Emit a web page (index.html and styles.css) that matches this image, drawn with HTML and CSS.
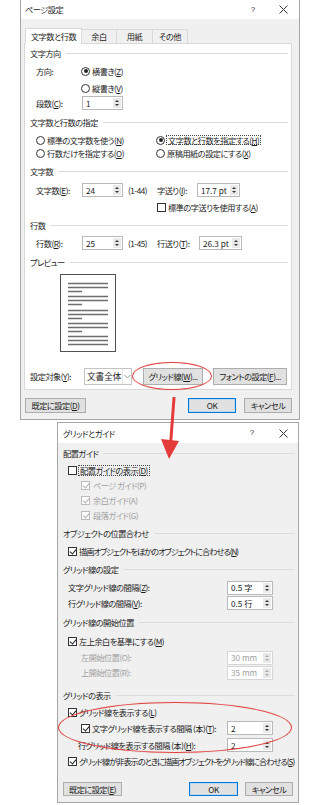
FILE: index.html
```html
<!DOCTYPE html>
<html lang="ja">
<head>
<meta charset="utf-8">
<title>ページ設定</title>
<link rel="stylesheet" href="styles.css">
</head>
<body>
<div class="page">

  <div class="dlg dlg1">
    <div class="titlebar">
      <span class="ttl">ページ設定</span>
      <span class="help">?</span>
      <span class="close"><svg width="9" height="9" viewBox="0 0 9 9"><path d="M0.5 0.5L8.5 8.5M8.5 0.5L0.5 8.5" stroke="#333" stroke-width="1"/></svg></span>
    </div>
    <div class="body1">
      <div class="tabs">
        <div class="tab active t1">文字数と行数</div>
        <div class="tab t2">余白</div>
        <div class="tab t3">用紙</div>
        <div class="tab t4">その他</div>
      </div>
      <div class="panel">
        <div class="grp h16 mt1"><span>文字方向</span><i class="sep"></i></div>
        <div class="row h20 ind6"><span class="lbl w45">方向:</span><span class="radio on"></span><span class="gap2">横書き(<u>Z</u>)</span></div>
        <div class="row h14 ind51"><span class="radio"></span><span class="gap2">縦書き(<u>V</u>)</span></div>
        <div class="row h16 ind6"><span class="lbl w46">段数(<u>C</u>):</span><span class="spin w41"><span class="val">1</span><span class="arrows"><i class="up"></i><i class="dn"></i></span></span></div>

        <div class="grp h22"><span>文字数と行数の指定</span><i class="sep"></i></div>
        <div class="row h14 ind6">
          <span class="rcell"><span class="radio"></span><span class="gap2">標準の文字数を使う(<u>N</u>)</span></span>
          <span class="rcell"><span class="radio on"></span><span class="gap2 focus">文字数と行数を指定する(<u>H</u>)</span></span>
        </div>
        <div class="row h12 ind6">
          <span class="rcell"><span class="radio"></span><span class="gap2">行数だけを指定する(<u>O</u>)</span></span>
          <span class="rcell"><span class="radio"></span><span class="gap2">原稿用紙の設定にする(<u>X</u>)</span></span>
        </div>

        <div class="grp h24"><span>文字数</span><i class="sep"></i></div>
        <div class="row h14 ind6">
          <span class="lbl w46">文字数(<u>E</u>):</span>
          <span class="spin w41"><span class="val">24</span><span class="arrows"><i class="up"></i><i class="dn"></i></span></span>
          <span class="lbl w34 pl5">(1-44)</span>
          <span class="lbl w40">字送り(<u>I</u>):</span>
          <span class="spin w43"><span class="val">17.7 pt</span><span class="arrows"><i class="up"></i><i class="dn"></i></span></span>
        </div>
        <div class="row h20 ind127"><span class="cb"></span><span class="gap2">標準の字送りを使用する(<u>A</u>)</span></div>

        <div class="grp h16"><span>行数</span><i class="sep"></i></div>
        <div class="row h20 ind6">
          <span class="lbl w46">行数(<u>R</u>):</span>
          <span class="spin w41"><span class="val">25</span><span class="arrows"><i class="up"></i><i class="dn"></i></span></span>
          <span class="lbl w34 pl5">(1-45)</span>
          <span class="lbl w42">行送り(<u>T</u>):</span>
          <span class="spin w43"><span class="val">26.3 pt</span><span class="arrows"><i class="up"></i><i class="dn"></i></span></span>
        </div>

        <div class="grp h18"><span>プレビュー</span><i class="sep"></i></div>
        <div class="preview">
          <svg width="54" height="76" viewBox="0 0 54 76">
            <g stroke="#6e6e6e" stroke-width="1.3">
              <path d="M7 8.5H47M7 12.5H47M7 16.5H21"/>
              <path d="M7 21.5H47M7 25.5H47M7 29.5H21"/>
              <path d="M7 35.5H47M7 39.5H47M7 43.5H21"/>
              <path d="M7 48.5H47M7 52.5H47M7 56.5H21"/>
              <path d="M7 61.5H47M7 65.5H47M7 69.5H47"/>
            </g>
          </svg>
        </div>

        <div class="row h17 mt16">
          <span class="lbl w54">設定対象(<u>Y</u>):</span>
          <span class="select"><span class="val">文書全体</span><span class="chev"><svg width="7" height="5" viewBox="0 0 7 5"><path d="M0.5 1L3.5 4L6.5 1" fill="none" stroke="#9a9a9a" stroke-width="1"/></svg></span></span>
          <span class="btn b60 ml11">グリッド線(<u>W</u>)...</span>
          <span class="btn b74 ml10">フォントの設定(<u>F</u>)...</span>
        </div>
      </div>
      <div class="footer1">
        <span class="btn b61">既定に設定(<u>D</u>)</span>
        <span class="spacer"></span>
        <span class="btn ok b48">OK</span>
        <span class="btn b48 ml8">キャンセル</span>
      </div>
    </div>
  </div>

  <div class="dlg dlg2">
    <div class="titlebar">
      <span class="ttl">グリッドとガイド</span>
      <span class="help">?</span>
      <span class="close"><svg width="9" height="9" viewBox="0 0 9 9"><path d="M0.5 0.5L8.5 8.5M8.5 0.5L0.5 8.5" stroke="#333" stroke-width="1"/></svg></span>
    </div>
    <div class="body2">
      <div class="grp h20"><span>配置ガイド</span><i class="sep"></i></div>
      <div class="row h15 ind5"><span class="cb"></span><span class="gap2 focus">配置ガイドの表示(<u>D</u>)</span></div>
      <div class="row h15 ind18 dis"><span class="cb on"></span><span class="gap3">ページ ガイド(P)</span></div>
      <div class="row h14 ind18 dis"><span class="cb on"></span><span class="gap3">余白ガイド(A)</span></div>
      <div class="row h16 ind18 dis"><span class="cb on"></span><span class="gap3">段落ガイド(G)</span></div>

      <div class="grp h20"><span>オブジェクトの位置合わせ</span><i class="sep"></i></div>
      <div class="row h16 ind5"><span class="cb on"></span><span class="gap2 tight">描画オブジェクトをほかのオブジェクトに合わせる(<u>N</u>)</span></div>

      <div class="grp h21"><span>グリッド線の設定</span><i class="sep"></i></div>
      <div class="row h15 ind5 sp"><span>文字グリッド線の間隔(<u>Z</u>):</span><span class="spin w46"><span class="val">0.5 字</span><span class="arrows"><i class="up"></i><i class="dn"></i></span></span></div>
      <div class="row h16 ind5 sp"><span>行グリッド線の間隔(<u>V</u>):</span><span class="spin w46"><span class="val">0.5 行</span><span class="arrows"><i class="up"></i><i class="dn"></i></span></span></div>

      <div class="grp h23"><span>グリッド線の開始位置</span><i class="sep"></i></div>
      <div class="row h14 ind5"><span class="cb on"></span><span class="gap2">左上余白を基準にする(<u>M</u>)</span></div>
      <div class="row h15 mt2 ind18 sp dis"><span>左開始位置(O):</span><span class="spin w46 dspin"><span class="val">30 mm</span><span class="arrows"><i class="up"></i><i class="dn"></i></span></span></div>
      <div class="row h15 ind18 sp dis"><span>上開始位置(R):</span><span class="spin w46 dspin"><span class="val">35 mm</span><span class="arrows"><i class="up"></i><i class="dn"></i></span></span></div>

      <div class="grp h14 mt8"><span>グリッドの表示</span><i class="sep"></i></div>
      <div class="row h16 mt2 ind5"><span class="cb on"></span><span class="gap2">グリッド線を表示する(<u>L</u>)</span></div>
      <div class="row h16 ind18 sp"><span class="cbl"><span class="cb on"></span><span class="gap2">文字グリッド線を表示する間隔 (本)(<u>T</u>):</span></span><span class="spin w46"><span class="val">2</span><span class="arrows"><i class="up"></i><i class="dn"></i></span></span></div>
      <div class="row h16 mt1 ind15 sp"><span>行グリッド線を表示する間隔 (本)(<u>H</u>):</span><span class="spin w46"><span class="val">2</span><span class="arrows"><i class="up"></i><i class="dn"></i></span></span></div>
      <div class="row h16 ind5"><span class="cb on"></span><span class="gap2 tight">グリッド線が非表示のときに描画オブジェクトをグリッド線に合わせる(<u>S</u>)</span></div>

      <div class="footer2">
        <span class="btn b59">既定に設定(<u>E</u>)</span>
        <span class="spacer"></span>
        <span class="btn ok b49">OK</span>
        <span class="btn b48 ml7">キャンセル</span>
      </div>
    </div>
  </div>

  <div class="ring ring1"></div>
  <div class="ring ring2"></div>
  <svg class="arrow" width="30" height="70" viewBox="0 0 30 70">
    <path d="M17 1L13.5 48" stroke="#e53a3a" stroke-width="3" fill="none" stroke-linecap="round"/>
    <path d="M4 42L22 44L12 62Z" fill="#e53a3a"/>
  </svg>
</div>
</body>
</html>
```

FILE: styles.css
```css
* { box-sizing: border-box; margin: 0; padding: 0; }
html, body { width: 320px; height: 805px; background: #fff; overflow: hidden; }
body {
  font-family: "Noto Sans CJK JP", "Noto Sans", sans-serif;
  font-size: 8.2px;
  line-height: 1;
  letter-spacing: -0.5px;
  color: #1b1b1b;
  font-feature-settings: "palt";
}
u { text-decoration: underline; text-underline-offset: 1px; }
i { font-style: normal; }
.tight { letter-spacing: -1px; }

.page { position: relative; width: 320px; height: 805px; }

.dlg { background: #f0f0f0; border: 1px solid #a6a6a6; display: flex; flex-direction: column; }
.dlg1 { margin-left: 20px; width: 280px; height: 420px; border-top: none; }
.dlg2 { margin-left: 57px; margin-top: 2px; width: 242px; height: 381px; }

.titlebar { background: #fff; display: flex; align-items: center; flex: none; }
.dlg1 .titlebar { height: 19px; padding-left: 4px; padding-right: 6px; }
.dlg2 .titlebar { height: 20px; padding-left: 5px; padding-right: 5px; }
.ttl { flex: 1; }
.help { width: 12px; text-align: center; font-family: "Liberation Sans", sans-serif; font-size: 8px; color: #333; letter-spacing: 0; }
.dlg1 .help { margin-right: 14px; }
.dlg2 .help { margin-right: 15px; }
.close { width: 20px; display: flex; justify-content: center; align-items: center; }

/* dialog 1 body */
.body1 { flex: 1; display: flex; flex-direction: column; padding: 9px 7px 0 3px; }
.tabs { display: flex; height: 15px; margin-left: 1px; flex: none; }
.tab {
  border: 1px solid #d9d9d9; border-bottom: none; background: #f0f0f0;
  margin-top: 1px; margin-right: -1px;
  display: flex; align-items: center; justify-content: center;
}
.tab.active { background: #fff; margin-top: 0; position: relative; z-index: 1; margin-bottom: -1px; }
.t1 { width: 57px; }
.t2 { width: 36px; }
.t3 { width: 37px; }
.t4 { width: 36px; }

.panel {
  background: #fff; border: 1px solid #d9d9d9; height: 347px; flex: none;
  display: flex; flex-direction: column; padding: 0 3px 0 5px;
}

.grp { display: flex; align-items: center; flex: none; }
.sep { flex: 1; height: 1px; background: #dcdcdc; margin-left: 5px; }

.row { display: flex; align-items: center; flex: none; white-space: nowrap; }
.sp { justify-content: space-between; padding-right: 22px; }

.h12 { height: 12px; } .h14 { height: 14px; } .h15 { height: 15px; } .h16 { height: 16px; }
.h17 { height: 17px; } .h18 { height: 18px; } .h20 { height: 20px; } .h21 { height: 21px; }
.h22 { height: 22px; } .h23 { height: 23px; } .h24 { height: 24px; }
.mt1 { margin-top: 1px; } .mt2 { margin-top: 2px; } .mt8 { margin-top: 8px; } .mt16 { margin-top: 16px; }

.ind5 { padding-left: 5px; } .ind6 { padding-left: 6px; } .ind15 { padding-left: 15px; }
.ind18 { padding-left: 18px; } .ind51 { padding-left: 51px; } .ind127 { padding-left: 127px; }

.lbl { flex: none; }
.w34 { width: 34px; } .w40 { width: 40px; } .w42 { width: 42px; } .w45 { width: 45px; }
.w46 { width: 46px; } .w54 { width: 54px; }
.pl5 { padding-left: 5px; }
.gap2 { margin-left: 2px; } .gap3 { margin-left: 3px; }
.ml7 { margin-left: 7px; } .ml8 { margin-left: 8px; } .ml10 { margin-left: 10px; } .ml11 { margin-left: 11px; }

.rcell { display: flex; align-items: center; width: 120px; }

.focus { outline: 1px dotted #444; outline-offset: 0; padding: 0 1px; }

/* radio */
.radio { width: 9px; height: 9px; border: 1px solid #333; border-radius: 50%; background: #fff; flex: none; position: relative; }
.radio.on::after { content: ""; position: absolute; left: 1.5px; top: 1.5px; width: 4px; height: 4px; border-radius: 50%; background: #222; }

/* checkbox */
.cb { width: 9px; height: 9px; border: 1px solid #333; background: #fff; flex: none; position: relative; }
.cb.on::after {
  content: ""; position: absolute; left: 2px; top: 0px; width: 3px; height: 5px;
  border-right: 1px solid #222; border-bottom: 1px solid #222; transform: rotate(40deg);
}
.cbl { display: flex; align-items: center; }
.dis { color: #a0a0a0; }
.dis .cb { border-color: #bcbcbc; }
.dis .cb.on::after { border-color: #b0b0b0; }

/* spinbox */
.spin { display: flex; height: 14px; border: 1px solid #b9b9b9; background: #fff; flex: none; }
.w41 { width: 41px; } .w43 { width: 43px; }
.spin.w46 { width: 46px; }
.val { flex: 1; display: flex; align-items: center; padding-left: 3px; letter-spacing: 0; }
.arrows { width: 8px; margin: 1px; background: #e9e9e9; display: flex; flex-direction: column; align-items: center; justify-content: center; gap: 2px; }
.up { width: 0; height: 0; border-left: 2px solid transparent; border-right: 2px solid transparent; border-bottom: 2px solid #333; }
.dn { width: 0; height: 0; border-left: 2px solid transparent; border-right: 2px solid transparent; border-top: 2px solid #333; }
.dspin { border-color: #d6d6d6; }
.dspin .up { border-bottom-color: #aaa; }
.dspin .dn { border-top-color: #aaa; }

/* preview */
.preview { margin-top: 3px; margin-left: 30px; width: 56px; height: 78px; border: 1px solid #505050; background: #fff; flex: none; }
.preview svg { display: block; }

/* select */
.select { width: 48px; height: 17px; border: 1px solid #c4c4c4; background: #fff; display: flex; flex: none; }
.select .val { padding-left: 2px; font-size: 8.6px; }
.chev { width: 9px; display: flex; align-items: center; justify-content: center; border-left: 1px solid #e4e4e4; }

/* buttons */
.btn { height: 17px; border: 1px solid #adadad; background: #e1e1e1; display: flex; align-items: center; justify-content: center; flex: none; white-space: nowrap; }
.b48 { width: 48px; } .b49 { width: 49px; } .b59 { width: 59px; } .b60 { width: 60px; } .b61 { width: 61px; } .b74 { width: 74px; }
.ok { border: 1px solid #0078d7; box-shadow: inset 0 0 0 1px #bcd8f1; }
.spacer { flex: 1; }

.footer1 { display: flex; margin-top: 8px; margin-left: 1px; }
.footer1 .btn { height: 15px; }

.body2 { flex: 1; display: flex; flex-direction: column; padding: 0 3px 0 5px; }
.footer2 { display: flex; margin-top: 13px; margin-right: 2px; }
.footer2 .btn { height: 14px; }

/* annotations */
.ring { position: absolute; border: 1.6px solid #e0413d; border-radius: 50%; box-shadow: 0 0 1px rgba(224,65,61,0.5); }
.ring1 { left: 132px; top: 362px; width: 80px; height: 28px; }
.ring2 { left: 58px; top: 702px; width: 234px; height: 51px; }
.arrow { position: absolute; left: 157px; top: 397px; }
```
